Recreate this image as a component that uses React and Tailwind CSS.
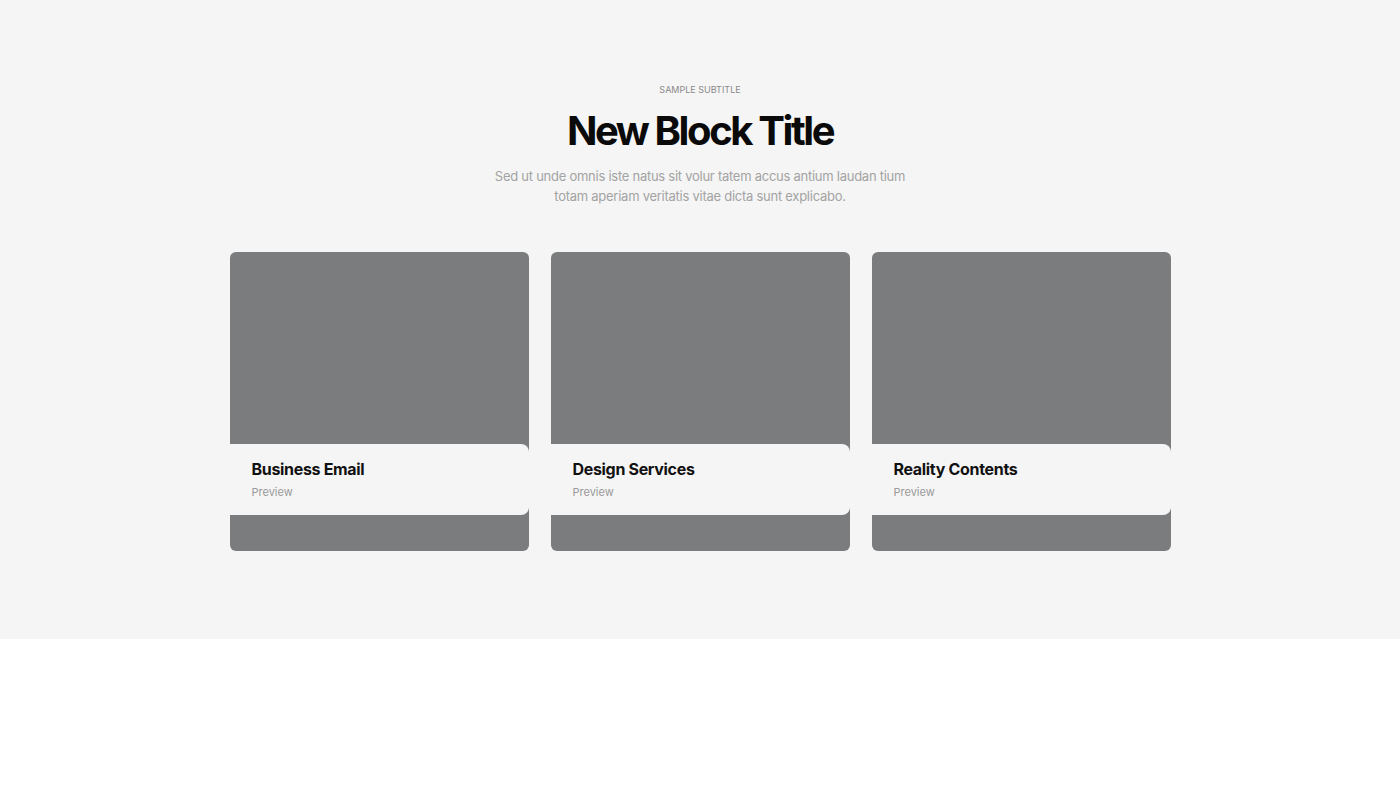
import React from "react";

const cards = [
  { id: 1, title: "Business Email" },
  { id: 2, title: "Design Services" },
  { id: 3, title: "Reality Contents" },
];

const App = () => {
  return (
    <div className="min-h-[788px] bg-white font-['Inter',sans-serif]">
      <section className="bg-[#f5f5f5] pt-[83px] pb-[88px]">
        {/* Heading */}
        <div className="flex flex-col items-center text-center">
          <p className="text-[9px] leading-[14px] uppercase text-[#8a8a8a]">Sample Subtitle</p>
          <h1 className="mt-[8px] text-[40px] leading-[52px] font-bold tracking-[-0.06em] text-[#0a0a0a]">
            New Block Title
          </h1>
          <p className="mt-[9px] w-[414px] text-[13px] leading-[20px] tracking-[-0.02em] text-[#a3a3a3]">
            Sed ut unde omnis iste natus sit volur tatem accus antium laudan tium totam aperiam veritatis vitae dicta sunt explicabo.
          </p>
        </div>

        {/* Cards */}
        <div className="mx-auto mt-[46px] grid w-[941px] grid-cols-3 gap-[22px]">
          {cards.map((card) => (
            <div key={card.id} className="flex h-[299px] flex-col justify-end rounded-[6px] bg-[#7b7c7d] pb-[36px]">
              <div className="h-[71px] rounded-r-[8px] bg-[#f5f5f5] px-[22px] pt-[14px]">
                <h3 className="text-[16px] leading-[22px] font-bold tracking-[-0.02em] text-[#111]">{card.title}</h3>
                <p className="mt-[5px] text-[11px] leading-[14px] text-[#9a9a9a]">Preview</p>
              </div>
            </div>
          ))}
        </div>
      </section>
    </div>
  );
};

export default App;
